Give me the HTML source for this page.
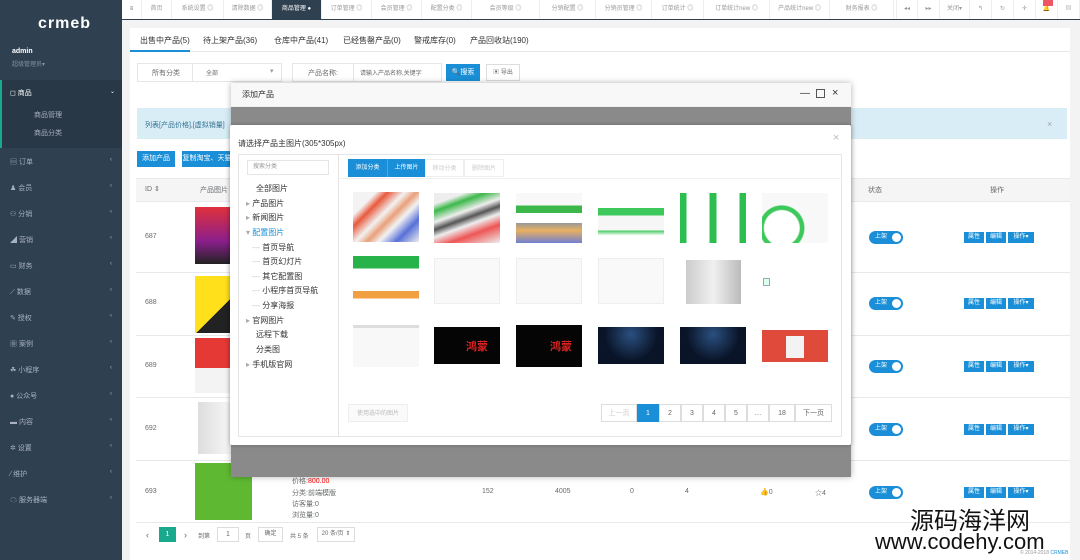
<!DOCTYPE html>
<html><head><meta charset="utf-8"><style>
*{box-sizing:border-box;margin:0;padding:0}
body{width:1080px;height:560px;overflow:hidden;background:#f3f3f4;font-family:"Liberation Sans","Noto Sans CJK SC",sans-serif;font-size:8px;color:#676a6c;position:relative}
.a{position:absolute}
.sb{left:0;top:0;width:122px;height:560px;background:#2f4050}
.nav{left:10px;color:#a7b1c2;font-size:7px}
.nav .ar{position:absolute;left:100px;font-size:6px}
.top{left:122px;top:0;width:958px;height:20px;background:#fff;border-bottom:1px solid #2f4050}
.tab{top:0;height:19px;line-height:19px;font-size:6px;color:#999;border-right:1px solid #eee;text-align:center}
.btnb{background:#1a8fd7;color:#fff;font-size:7px;text-align:center}
.row{left:136px;width:934px;border-top:1px solid #e7eaec;background:#fff}
.t{font-size:7px;color:#676a6c}
.mt{font-size:8px;color:#333}
.img{background:#eee}
.pg{top:404px;height:18px;line-height:18px;border:1px solid #ddd;margin-left:-1px;text-align:center;font-size:7px;color:#666;background:#fff}
.tr{font-size:8px;color:#333}
.sw{width:34px;height:13px;border-radius:7px;background:#1a8fd7;color:#fff;font-size:6px;line-height:13px;padding-left:6px}
.sw:after{content:"";position:absolute;right:2px;top:2px;width:9px;height:9px;border-radius:50%;background:#fff}
.ob{height:11px;line-height:11px;background:#1a8fd7;color:#fff;font-size:6px;text-align:center}
</style></head><body>
<div class="a sb"></div>
<div class="a" style="left:38px;top:15px;color:#fff;font-size:16px;font-weight:bold;letter-spacing:1px">crmeb</div>
<div class="a" style="left:12px;top:48px;color:#fff;font-size:7px;font-weight:bold">admin</div>
<div class="a" style="left:12px;top:59px;color:#8095a8;font-size:6px">超级管理员▾</div>
<div class="a" style="left:0;top:80px;width:122px;height:68px;background:#293846;border-left:2px solid #19aa8d"></div>
<div class="a nav" style="top:88px;color:#fff">◻ 商品<span class="ar">⌄</span></div>
<div class="a nav" style="left:34px;top:110px">商品管理</div>
<div class="a nav" style="left:34px;top:128px">商品分类</div>
<div class="a nav" style="top:157px">▤ 订单<span class="ar">‹</span></div>
<div class="a nav" style="top:183px">♟ 会员<span class="ar">‹</span></div>
<div class="a nav" style="top:209px">⚇ 分销<span class="ar">‹</span></div>
<div class="a nav" style="top:235px">◢ 营销<span class="ar">‹</span></div>
<div class="a nav" style="top:261px">▭ 财务<span class="ar">‹</span></div>
<div class="a nav" style="top:287px">⟋ 数据<span class="ar">‹</span></div>
<div class="a nav" style="top:313px">✎ 授权<span class="ar">‹</span></div>
<div class="a nav" style="top:339px">▦ 案例<span class="ar">‹</span></div>
<div class="a nav" style="top:365px">☘ 小程序<span class="ar">‹</span></div>
<div class="a nav" style="top:391px">● 公众号<span class="ar">‹</span></div>
<div class="a nav" style="top:417px">▬ 内容<span class="ar">‹</span></div>
<div class="a nav" style="top:443px">✲ 设置<span class="ar">‹</span></div>
<div class="a nav" style="top:469px">⁄ 维护<span class="ar">‹</span></div>
<div class="a nav" style="top:495px">☁ 服务器端<span class="ar">‹</span></div>

<div class="a top"></div>
<div class="a tab" style="left:122px;width:20px;color:#666">≡</div>
<div class="a tab" style="left:142px;width:30px">首页</div>
<div class="a tab" style="left:172px;width:52px">系统设置 ◎</div>
<div class="a tab" style="left:224px;width:48px">清除数据 ◎</div>
<div class="a tab" style="left:272px;width:50px;background:#2f4050;color:#fff">商品管理 ●</div>
<div class="a tab" style="left:322px;width:50px">订单管理 ◎</div>
<div class="a tab" style="left:372px;width:50px">会员管理 ◎</div>
<div class="a tab" style="left:422px;width:50px">配置分类 ◎</div>
<div class="a tab" style="left:472px;width:68px">会员等级 ◎</div>
<div class="a tab" style="left:540px;width:56px">分销配置 ◎</div>
<div class="a tab" style="left:596px;width:56px">分销员管理 ◎</div>
<div class="a tab" style="left:652px;width:52px">订单统计 ◎</div>
<div class="a tab" style="left:704px;width:66px">订单统计new ◎</div>
<div class="a tab" style="left:770px;width:60px">产品统计new ◎</div>
<div class="a tab" style="left:830px;width:64px">财务报表 ◎</div>
<div class="a tab" style="left:896px;width:22px;border-left:1px solid #eee">◂◂</div>
<div class="a tab" style="left:918px;width:22px">▸▸</div>
<div class="a tab" style="left:940px;width:30px">关闭▾</div>
<div class="a tab" style="left:970px;width:22px">↰</div>
<div class="a tab" style="left:992px;width:22px">↻</div>
<div class="a tab" style="left:1014px;width:22px">✛</div>
<div class="a tab" style="left:1036px;width:22px">🔔</div>
<div class="a" style="left:1043px;top:0;width:10px;height:6px;background:#ed5565"></div>
<div class="a tab" style="left:1058px;width:22px">▤</div>

<div class="a" style="left:130px;top:28px;width:940px;height:532px;background:#fff"></div>
<div class="a" style="left:130px;top:51px;width:940px;height:1px;background:#e7eaec"></div>
<div class="a" style="left:130px;top:50px;width:60px;height:2px;background:#1a8fd7"></div>
<div class="a mt" style="left:140px;top:35px">出售中产品(5)</div>
<div class="a mt" style="left:203px;top:35px">待上架产品(36)</div>
<div class="a mt" style="left:274px;top:35px">仓库中产品(41)</div>
<div class="a mt" style="left:343px;top:35px">已经售罄产品(0)</div>
<div class="a mt" style="left:414px;top:35px">警戒库存(0)</div>
<div class="a mt" style="left:470px;top:35px">产品回收站(190)</div>
<div class="a" style="left:137px;top:63px;width:145px;height:19px;border:1px solid #e5e6e7"></div>
<div class="a" style="left:192px;top:63px;width:1px;height:19px;background:#e5e6e7"></div>
<div class="a t" style="left:152px;top:68px">所有分类</div>
<div class="a t" style="left:206px;top:68px;font-size:6px">全部</div>
<div class="a t" style="left:270px;top:67px;color:#999">▾</div>
<div class="a" style="left:292px;top:63px;width:150px;height:19px;border:1px solid #e5e6e7"></div>
<div class="a" style="left:353px;top:63px;width:1px;height:19px;background:#e5e6e7"></div>
<div class="a t" style="left:308px;top:68px">产品名称:</div>
<div class="a t" style="left:360px;top:68px;font-size:6px">请输入产品名称,关键字</div>
<div class="a btnb" style="left:446px;top:64px;width:34px;height:17px;line-height:17px">🔍搜索</div>
<div class="a" style="left:486px;top:64px;width:34px;height:17px;line-height:17px;border:1px solid #ddd;font-size:6px;text-align:center">▣ 导出</div>
<div class="a" style="left:137px;top:108px;width:930px;height:31px;background:#d9edf7"></div>
<div class="a t" style="left:145px;top:120px;color:#31708f">列表[产品价格],[虚拟销量]</div>
<div class="a" style="left:1047px;top:119px;color:#9ab;font-size:9px">×</div>
<div class="a btnb" style="left:137px;top:151px;width:38px;height:16px;line-height:16px">添加产品</div>
<div class="a btnb" style="left:182px;top:151px;width:50px;height:16px;line-height:16px">复制淘宝、天猫</div>

<div class="a row" style="top:178px;height:23px;background:#f5f5f6"></div>
<div class="a t" style="left:145px;top:185px">ID ⇕</div>
<div class="a t" style="left:200px;top:185px">产品图片</div>
<div class="a t" style="left:868px;top:185px">状态</div>
<div class="a t" style="left:990px;top:185px">操作</div>
<div class="a row" style="top:201px;height:71px"></div>
<div class="a row" style="top:272px;height:63px"></div>
<div class="a row" style="top:335px;height:62px"></div>
<div class="a row" style="top:397px;height:63px"></div>
<div class="a row" style="top:460px;height:62px"></div>
<div class="a row" style="top:522px;height:1px"></div>
<div class="a t" style="left:145px;top:233px">687</div>
<div class="a t" style="left:145px;top:299px">688</div>
<div class="a t" style="left:145px;top:362px">689</div>
<div class="a t" style="left:145px;top:425px">692</div>
<div class="a t" style="left:145px;top:488px">693</div>
<div class="a" style="left:195px;top:207px;width:40px;height:57px;background:linear-gradient(#e0313b,#8b1f8c 60%,#222)"></div>
<div class="a" style="left:195px;top:276px;width:40px;height:57px;background:linear-gradient(135deg,#ffe01a 60%,#222 60%)"></div>
<div class="a" style="left:195px;top:338px;width:40px;height:55px;background:linear-gradient(#e53935 55%,#f3f3f3 55%)"></div>
<div class="a" style="left:198px;top:402px;width:34px;height:52px;background:linear-gradient(90deg,#ddd,#f8f8f8)"></div>
<div class="a" style="left:195px;top:463px;width:57px;height:57px;background:#5fb832"></div>
<div class="a t" style="left:292px;top:467px">库存 0</div>
<div class="a t" style="left:292px;top:476px">价格:<span style="color:red">800.00</span></div>
<div class="a t" style="left:292px;top:488px">分类:前端模版</div>
<div class="a t" style="left:292px;top:499px">访客量:0</div>
<div class="a t" style="left:292px;top:510px">浏览量:0</div>
<div class="a t" style="left:482px;top:488px">152</div>
<div class="a t" style="left:555px;top:488px">4005</div>
<div class="a t" style="left:630px;top:488px">0</div>
<div class="a t" style="left:685px;top:488px">4</div>
<div class="a t" style="left:760px;top:488px">👍0</div>
<div class="a t" style="left:815px;top:488px">☆4</div>
<div class="a sw" style="left:869px;top:231px">上架</div>
<div class="a sw" style="left:869px;top:297px">上架</div>
<div class="a sw" style="left:869px;top:360px">上架</div>
<div class="a sw" style="left:869px;top:423px">上架</div>
<div class="a sw" style="left:869px;top:486px">上架</div>
<div class="a" style="left:964px;top:232px;width:70px;height:11px"><div class="a ob" style="left:0;width:20px">属性</div><div class="a ob" style="left:22px;width:20px">编辑</div><div class="a ob" style="left:44px;width:26px">操作▾</div></div>
<div class="a" style="left:964px;top:298px;width:70px;height:11px"><div class="a ob" style="left:0;width:20px">属性</div><div class="a ob" style="left:22px;width:20px">编辑</div><div class="a ob" style="left:44px;width:26px">操作▾</div></div>
<div class="a" style="left:964px;top:361px;width:70px;height:11px"><div class="a ob" style="left:0;width:20px">属性</div><div class="a ob" style="left:22px;width:20px">编辑</div><div class="a ob" style="left:44px;width:26px">操作▾</div></div>
<div class="a" style="left:964px;top:424px;width:70px;height:11px"><div class="a ob" style="left:0;width:20px">属性</div><div class="a ob" style="left:22px;width:20px">编辑</div><div class="a ob" style="left:44px;width:26px">操作▾</div></div>
<div class="a" style="left:964px;top:487px;width:70px;height:11px"><div class="a ob" style="left:0;width:20px">属性</div><div class="a ob" style="left:22px;width:20px">编辑</div><div class="a ob" style="left:44px;width:26px">操作▾</div></div>
<div class="a t" style="left:146px;top:530px;font-size:9px">‹</div>
<div class="a" style="left:159px;top:527px;width:17px;height:15px;background:#19aa8d;color:#fff;text-align:center;line-height:15px;font-size:7px">1</div>
<div class="a t" style="left:184px;top:530px;font-size:9px">›</div>
<div class="a t" style="left:198px;top:531px;font-size:6px">到第</div>
<div class="a" style="left:217px;top:527px;width:22px;height:15px;border:1px solid #ddd;font-size:7px;line-height:13px;text-align:center">1</div>
<div class="a t" style="left:245px;top:531px;font-size:6px">页</div>
<div class="a" style="left:258px;top:527px;width:25px;height:15px;border:1px solid #ddd;font-size:6px;line-height:13px;text-align:center">确定</div>
<div class="a t" style="left:290px;top:531px;font-size:6px">共 5 条</div>
<div class="a" style="left:317px;top:527px;width:38px;height:15px;border:1px solid #ddd;font-size:6px;line-height:13px;text-align:center">20 条/页 ⇕</div>
<div class="a" style="left:1020px;top:550px;font-size:5px;color:#999">© 2014-2018 <span style="color:#1a8fd7">CRMEB</span></div>

<div class="a" style="left:231px;top:83px;width:620px;height:394px;background:#8a8a8a;box-shadow:0 0 6px rgba(0,0,0,.3)"></div>
<div class="a" style="left:231px;top:83px;width:620px;height:24px;background:#f8f8f8;border-bottom:1px solid #eee"></div>
<div class="a" style="left:242px;top:89px;font-size:8px;color:#333">添加产品</div>
<div class="a" style="left:800px;top:88px;font-size:10px;color:#333">—</div>
<div class="a" style="left:816px;top:89px;width:9px;height:9px;border:1px solid #555"></div>
<div class="a" style="left:832px;top:87px;font-size:11px;color:#333">×</div>
<div class="a" style="left:230px;top:125px;width:621px;height:320px;background:#fff;border-radius:2px;box-shadow:0 0 4px rgba(0,0,0,.25)"></div>
<div class="a" style="left:238px;top:138px;font-size:8px;color:#333">请选择产品主图片(305*305px)</div>
<div class="a" style="left:833px;top:132px;font-size:11px;color:#bbb">×</div>
<div class="a" style="left:238px;top:154px;width:604px;height:283px;border:1px solid #e5e5e5"></div>
<div class="a" style="left:338px;top:154px;width:1px;height:283px;background:#e5e5e5"></div>
<div class="a" style="left:339px;top:178px;width:503px;height:1px;background:#f0f0f0"></div>
<div class="a" style="left:247px;top:160px;width:82px;height:15px;border:1px solid #e5e5e5;font-size:6px;color:#999;line-height:13px;padding-left:5px">搜索分类</div>
<div class="a btnb" style="left:348px;top:159px;width:39px;height:18px;line-height:18px;font-size:6px">添加分类</div>
<div class="a btnb" style="left:387px;top:159px;width:38px;height:18px;line-height:18px;font-size:6px;border-left:1px solid #4aa7e6">上传图片</div>
<div class="a" style="left:425px;top:159px;width:39px;height:18px;line-height:18px;font-size:6px;color:#ccc;text-align:center;border:1px solid #eee">移动分类</div>
<div class="a" style="left:464px;top:159px;width:40px;height:18px;line-height:18px;font-size:6px;color:#ccc;text-align:center;border:1px solid #eee">删除图片</div>
<div class="a tr" style="left:256px;top:183px">全部图片</div>
<div class="a tr" style="left:246px;top:198px;color:#aaa">▸ <span style="color:#333">产品图片</span></div>
<div class="a tr" style="left:246px;top:212px;color:#aaa">▸ <span style="color:#333">新闻图片</span></div>
<div class="a tr" style="left:246px;top:227px;color:#aaa">▾ <span style="color:#1a8fd7">配置图片</span></div>
<div class="a tr" style="left:252px;top:242px"><span style="color:#ccc">—</span> 首页导航</div>
<div class="a tr" style="left:252px;top:256px"><span style="color:#ccc">—</span> 首页幻灯片</div>
<div class="a tr" style="left:252px;top:271px"><span style="color:#ccc">—</span> 其它配置图</div>
<div class="a tr" style="left:252px;top:285px"><span style="color:#ccc">—</span> 小程序首页导航</div>
<div class="a tr" style="left:252px;top:300px"><span style="color:#ccc">—</span> 分享海报</div>
<div class="a tr" style="left:246px;top:315px;color:#aaa">▸ <span style="color:#333">官网图片</span></div>
<div class="a tr" style="left:256px;top:329px">远程下载</div>
<div class="a tr" style="left:256px;top:344px">分类图</div>
<div class="a tr" style="left:246px;top:359px;color:#aaa">▸ <span style="color:#333">手机版官网</span></div>

<div class="a img" style="left:353px;top:192px;width:66px;height:50px;background:linear-gradient(135deg,#f3f3f3 20%,#e85a3c 30%,#f2f2f2 45%,#e9a07a 55%,#f3f3f3 65%,#5870d8 80%,#eee)"></div>
<div class="a img" style="left:434px;top:193px;width:66px;height:50px;background:linear-gradient(160deg,#eee 15%,#3cb84a 25%,#eee 40%,#555 50%,#eee 60%,#e55 75%,#eee)"></div>
<div class="a img" style="left:516px;top:193px;width:66px;height:50px;background:linear-gradient(#f8f8f8 25%,#3cb84a 25%,#3cb84a 40%,#fff 40%,#fff 60%,#999 60%,#e8b060 75%,#7080d0)"></div>
<div class="a img" style="left:598px;top:193px;width:66px;height:50px;background:linear-gradient(#fff 30%,#3cc85a 30%,#3cc85a 45%,#f6f6f6 45%,#f6f6f6 75%,#3cc85a 75%,#fff 85%)"></div>
<div class="a img" style="left:680px;top:193px;width:66px;height:50px;background:linear-gradient(90deg,#2cbf50 10%,#fff 10%,#fff 45%,#2cbf50 45%,#2cbf50 55%,#fff 55%,#fff 90%,#2cbf50 90%)"></div>
<div class="a img" style="left:762px;top:193px;width:66px;height:50px;background:radial-gradient(circle at 30% 70%,#fff 30%,#3cc85a 32%,#3cc85a 38%,#f8f8f8 40%)"></div>
<div class="a img" style="left:353px;top:256px;width:66px;height:50px;background:linear-gradient(#28b24a 25%,#fff 25%,#fff 70%,#f0a040 70%,#f0a040 85%,#fff 85%)"></div>
<div class="a img" style="left:434px;top:258px;width:66px;height:46px;background:#f9f9f9;border:1px solid #eee"></div>
<div class="a img" style="left:516px;top:258px;width:66px;height:46px;background:#f9f9f9;border:1px solid #eee"></div>
<div class="a img" style="left:598px;top:258px;width:66px;height:46px;background:#f9f9f9;border:1px solid #eee"></div>
<div class="a img" style="left:686px;top:260px;width:55px;height:44px;background:linear-gradient(90deg,#ccc,#f0f0f0,#bbb)"></div>
<div class="a" style="left:763px;top:278px;width:7px;height:8px;border:1px solid #9ab;background:#dfe"></div>
<div class="a img" style="left:353px;top:325px;width:66px;height:42px;background:#f8f8f8;border-top:3px solid #ddd"></div>
<div class="a img" style="left:434px;top:327px;width:66px;height:37px;background:#050505"><span style="position:absolute;left:32px;top:11px;color:#d22;font-size:11px;font-weight:bold">鸿蒙</span></div>
<div class="a img" style="left:516px;top:325px;width:66px;height:42px;background:#050505"><span style="position:absolute;left:34px;top:13px;color:#d22;font-size:11px;font-weight:bold">鸿蒙</span></div>
<div class="a img" style="left:598px;top:327px;width:66px;height:37px;background:radial-gradient(circle at 50% 20%,#2a5080,#0a1428 60%)"></div>
<div class="a img" style="left:680px;top:327px;width:66px;height:37px;background:radial-gradient(circle at 50% 20%,#2a5080,#0a1428 60%)"></div>
<div class="a img" style="left:762px;top:330px;width:66px;height:32px;background:#e04a3a"><div class="a" style="left:24px;top:6px;width:18px;height:22px;background:#f3f3f3"></div></div>

<div class="a" style="left:348px;top:404px;width:60px;height:18px;line-height:18px;border:1px solid #eee;background:#fafafa;color:#bbb;font-size:6px;text-align:center">使用选中的图片</div>
<div class="a pg" style="left:602px;width:36px;color:#ccc">上一页</div>
<div class="a pg" style="left:638px;width:22px;background:#1a8fd7;color:#fff;border-color:#1a8fd7">1</div>
<div class="a pg" style="left:660px;width:22px">2</div>
<div class="a pg" style="left:682px;width:22px">3</div>
<div class="a pg" style="left:704px;width:22px">4</div>
<div class="a pg" style="left:726px;width:22px">5</div>
<div class="a pg" style="left:748px;width:22px">…</div>
<div class="a pg" style="left:770px;width:26px">18</div>
<div class="a pg" style="left:796px;width:37px">下一页</div>

<div class="a" style="left:910px;top:505px;font-size:24px;color:#111;font-family:'Noto Sans CJK SC',sans-serif;line-height:28px">源码海洋网</div>
<div class="a" style="left:875px;top:530px;font-size:22px;color:#111;line-height:24px">www.codehy.com</div>
</body></html>
